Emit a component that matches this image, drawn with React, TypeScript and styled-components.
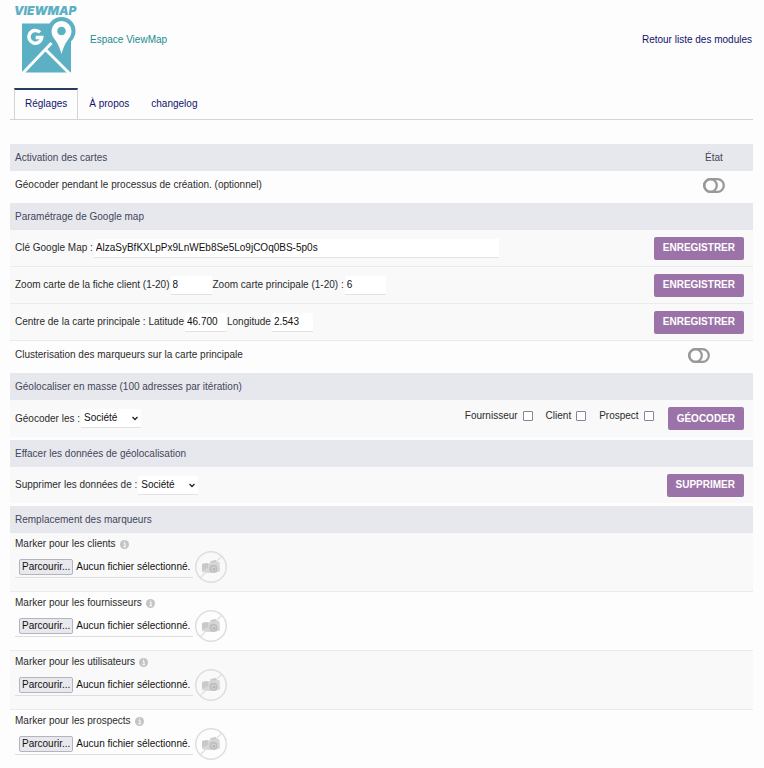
import React, { useId } from "react";
import styled, { createGlobalStyle } from "styled-components";

const GlobalStyle = createGlobalStyle`
  *, *::before, *::after { box-sizing: border-box; }
  body {
    margin: 0;
    background: #fdfdfd;
    color: #2b2b2b;
    font: 10px/12px "Liberation Sans", Arial, sans-serif;
  }
  input, select, button { font: inherit; color: inherit; margin: 0; }
`;

const Page = styled.main`
  padding: 0 11px 0 10px;
`;

const Header = styled.header`
  display: flex;
  align-items: center;
  height: 80px;
  padding: 0 1px 0 4px;
`;

const Logo = styled.svg`
  flex: none;
  width: 68px;
  height: 78px;
  overflow: visible;
`;

const LogoText = styled.text`
  font: italic 900 12px Inter, sans-serif;
  fill: #5cb0c3;
`;

const Title = styled.h1`
  flex: 1;
  margin: 0 0 0 8px;
  font-size: 10px;
  font-weight: 400;
  color: #1c8c8c;
`;

const NavLink = styled.a`
  color: #12126e;
  text-decoration: none;
`;

const Tabs = styled.nav`
  display: flex;
  margin-top: 8px;
  padding-left: 4px;
  border-bottom: 1px solid #d4d4d4;
`;

const Tab = styled(NavLink)<{ $active?: boolean }>`
  padding: 8px 10px 9px;
  border: 1px solid ${(p) => (p.$active ? "#d4d4d4" : "transparent")};
  border-top: 2px solid ${(p) => (p.$active ? "#263c5c" : "transparent")};
  border-bottom: 0;
`;

const Settings = styled.form`
  margin-top: 24px;
`;

const Section = styled.section<{ $gap?: boolean }>`
  padding-bottom: ${(p) => (p.$gap ? 3 : 0)}px;
`;

const SectionHead = styled.div`
  display: flex;
  align-items: center;
  justify-content: space-between;
  height: 27px;
  padding-left: 5px;
  background: #e7e8ed;
  color: #44465a;
`;

const SectionTitle = styled.h2`
  margin: 0;
  font-size: 10px;
  font-weight: 400;
`;

const Row = styled.div<{ $shade?: boolean; $line?: boolean; $height?: number }>`
  display: flex;
  align-items: center;
  justify-content: space-between;
  min-height: ${(p) => p.$height ?? 37}px;
  padding-left: 5px;
  background: ${(p) => (p.$shade ? "#f9f9f9" : "#fdfdfd")};
  border-bottom: ${(p) => (p.$line ? "1px solid #ebebeb" : "0")};
`;

const SwitchRow = styled(Row)`
  padding-bottom: 4px;
`;

const Fields = styled.div`
  display: flex;
  align-items: center;
  gap: 1px;
`;

const StateCell = styled.div<{ $wide?: boolean }>`
  display: flex;
  justify-content: center;
  width: ${(p) => (p.$wide ? 108 : 78)}px;
`;

const Actions = styled.div`
  display: flex;
  align-items: center;
  padding-right: 9px;
`;

const TextInput = styled.input<{ $long?: boolean }>`
  width: ${(p) => (p.$long ? 405 : 41)}px;
  height: 19px;
  padding: 0 2px;
  border: 0;
  border-bottom: 1px solid #e2e2e2;
  background: #fff;
  color: #111;
`;

const Button = styled.button`
  height: 23px;
  padding: 0 9px;
  border: 0;
  border-radius: 2px;
  background: #9c73a9;
  color: #fff;
  font-weight: 700;
  text-transform: uppercase;
  cursor: pointer;
`;

const SwitchButton = styled.button`
  display: flex;
  padding: 0;
  border: 0;
  background: none;
  cursor: pointer;
`;

const SelectBox = styled.div`
  display: grid;
  align-items: center;
  width: 60px;
  > * { grid-area: 1 / 1; }
  > svg { justify-self: end; margin-right: 3px; pointer-events: none; }
`;

const Select = styled.select`
  appearance: none;
  width: 100%;
  height: 19px;
  padding: 0 3px;
  border: 0;
  border-bottom: 1px solid #e2e2e2;
  border-radius: 0;
  background: #fff;
  color: #111;
`;

const Checks = styled.div`
  display: flex;
  gap: 13px;
  margin-right: 14px;
  padding-bottom: 5px;
`;

const CheckLabel = styled.label`
  display: flex;
  align-items: center;
  gap: 5px;
`;

const Check = styled.input`
  appearance: none;
  width: 10px;
  height: 10px;
  border: 1px solid #85859a;
  border-radius: 1px;
  background: #fff;
  &:checked { background: #9c73a9; }
`;

const MarkerRow = styled.div<{ $shade: boolean }>`
  padding: 5px 5px 7px;
  background: ${(p) => (p.$shade ? "#f9f9f9" : "#fdfdfd")};
  border-bottom: 1px solid #ebebeb;
`;

const MarkerTitle = styled.div`
  display: flex;
  align-items: center;
  gap: 4px;
`;

const MarkerFile = styled.div`
  display: flex;
  align-items: center;
  gap: 1px;
  height: 34px;
`;

const FileLabel = styled.label`
  position: relative;
  display: flex;
  align-items: center;
  gap: 3px;
  width: 178px;
  height: 22px;
  padding-left: 4px;
  border-bottom: 1px solid #dedede;
  color: #111;
  white-space: nowrap;
  cursor: pointer;
`;

const FileInput = styled.input`
  position: absolute;
  inset: 0;
  width: 100%;
  opacity: 0;
`;

const FileButton = styled.span`
  padding: 1px 2px;
  border: 1px solid #b4b4c0;
  border-radius: 2px;
  background: #e9e9ed;
`;

const ViewMapLogo = () => (
  <Logo viewBox="0 -4 68 78" role="img" aria-label="ViewMap">
    <LogoText x="0" y="10">VIEWMAP</LogoText>
    <path d="M8 18.500h49v49H8z" fill="#5cb0c3" />
    <path d="M8.500 68.500 37.500 38M31 44l25 25" stroke="#fdfdfd" strokeWidth="3" fill="none" />
    <path d="M26 27.400a6.400 6.400 0 1 0 1.700 5.200h-6" stroke="#fdfdfd" strokeWidth="3.500" fill="none" />
    <circle cx="47.500" cy="26" r="14" fill="#5cb0c3" />
    <path d="M37.500 26a10 10 0 0 1 20 0c0 4-1.800 6.500-4 9.500-3 4-4.500 8-6 13.500-1.500-5.500-3-9.500-6-13.500-2.200-3-4-5.500-4-9.500z" fill="#fdfdfd" />
    <circle cx="47.500" cy="26" r="4.300" fill="#5cb0c3" />
  </Logo>
);

const ToggleOff = () => (
  <svg width="22" height="15" viewBox="0 0 22 15" fill="none" stroke="#999" strokeWidth="2.300">
    <rect x="1.200" y="1.200" width="19.600" height="12.600" rx="6.300" />
    <circle cx="7.500" cy="7.500" r="6.300" />
  </svg>
);

const Chevron = () => (
  <svg width="6" height="5" viewBox="0 0 6 5" fill="none" stroke="#222" strokeWidth="1.3">
    <path d="m.5 1 2.500 2.500L5.500 1" />
  </svg>
);

const InfoIcon = () => (
  <svg width="9" height="9" viewBox="0 0 8 8" aria-hidden="true">
    <circle cx="4" cy="4" r="4" fill="#c4c4c4" />
    <path d="M3.200 3.300h1.300v2.500M3 6h2.200M3.500 1.800h1" stroke="#fff" strokeWidth="0.900" fill="none" />
  </svg>
);

const NoPhoto = () => (
  <svg width="34" height="34" viewBox="0 0 34 34" role="img" aria-label="Aucune image">
    <circle cx="17" cy="17" r="15.300" fill="none" stroke="#dedede" strokeWidth="1.500" />
    <path d="M6 28 28 6" stroke="#e0e0e0" strokeWidth="1.300" />
    <path d="M8 14 13 13l1 .5 2-.5.500-2 5-1 1.500 2 2.500.2.500 9-4 1.500-7 .3L8 22z" fill="#d6d6d6" />
    <path d="M8 14 13 13l1 1v4l-6 2.500zM17 11.200l4.500-1 1 1.500-5 1.200z" fill="#c9c9c9" />
    <circle cx="19.500" cy="18.800" r="4" fill="#bebebe" />
    <circle cx="19.700" cy="19" r="2.400" fill="#d2d2d2" />
    <circle cx="20" cy="19.200" r="1.300" fill="#b4b4b4" />
  </svg>
);

function Switch({ label }: { label: string }) {
  return (
    <SwitchButton type="button" role="switch" aria-checked={false} aria-label={label}>
      <ToggleOff />
    </SwitchButton>
  );
}

function Field({ label, value, long }: { label: string; value: string; long?: boolean }) {
  const id = useId();
  return (
    <>
      <label htmlFor={id}>{label}</label>
      <TextInput id={id} defaultValue={value} $long={long} />
    </>
  );
}

function TypeSelect({ label }: { label: string }) {
  const id = useId();
  return (
    <Fields>
      <label htmlFor={id}>{label}</label>
      <SelectBox>
        <Select id={id}>
          <option>Société</option>
        </Select>
        <Chevron />
      </SelectBox>
    </Fields>
  );
}

function Head({ title, children }: { title: string; children?: React.ReactNode }) {
  return (
    <SectionHead>
      <SectionTitle>{title}</SectionTitle>
      {children}
    </SectionHead>
  );
}

const Save = () => (
  <Actions>
    <Button type="button">Enregistrer</Button>
  </Actions>
);

function Marker({ name, shade }: { name: string; shade: boolean }) {
  return (
    <MarkerRow $shade={shade}>
      <MarkerTitle>
        Marker pour les {name}
        <InfoIcon />
      </MarkerTitle>
      <MarkerFile>
        <FileLabel>
          <FileInput type="file" aria-label={`Marker pour les ${name}`} />
          <FileButton>Parcourir...</FileButton>
          Aucun fichier sélectionné.
        </FileLabel>
        <NoPhoto />
      </MarkerFile>
    </MarkerRow>
  );
}

const CLUSTER = "Clusterisation des marqueurs sur la carte principale";
const GEOCODE = "Géocoder pendant le processus de création. (optionnel)";

export default function App() {
  return (
    <Page>
      <GlobalStyle />
      <Header>
        <ViewMapLogo />
        <Title>Espace ViewMap</Title>
        <NavLink href="#modules">Retour liste des modules</NavLink>
      </Header>
      <Tabs>
        <Tab href="#reglages" $active>Réglages</Tab>
        <Tab href="#apropos">À propos</Tab>
        <Tab href="#changelog">changelog</Tab>
      </Tabs>
      <Settings>
        <Section>
          <Head title="Activation des cartes">
            <StateCell>État</StateCell>
          </Head>
          <SwitchRow $height={32}>
            <span>{GEOCODE}</span>
            <StateCell><Switch label={GEOCODE} /></StateCell>
          </SwitchRow>
        </Section>
        <Section>
          <Head title="Paramétrage de Google map" />
          <Row $shade $line>
            <Fields>
              <Field label="Clé Google Map :" value="AlzaSyBfKXLpPx9LnWEb8Se5Lo9jCOq0BS-5p0s" long />
            </Fields>
            <Save />
          </Row>
          <Row $shade $line>
            <Fields>
              <Field label="Zoom carte de la fiche client (1-20)" value="8" />
              <Field label="Zoom carte principale (1-20) :" value="6" />
            </Fields>
            <Save />
          </Row>
          <Row $shade $line>
            <Fields>
              <Field label="Centre de la carte principale : Latitude" value="46.700" />
              <Field label="Longitude" value="2.543" />
            </Fields>
            <Save />
          </Row>
          <SwitchRow $height={32}>
            <span>{CLUSTER}</span>
            <StateCell $wide><Switch label={CLUSTER} /></StateCell>
          </SwitchRow>
        </Section>
        <Section $gap>
          <Head title="Géolocaliser en masse (100 adresses par itération)" />
          <Row $shade>
            <TypeSelect label="Géocoder les :" />
            <Actions>
              <Checks>
                {["Fournisseur", "Client", "Prospect"].map((name) => (
                  <CheckLabel key={name}>
                    {name}
                    <Check type="checkbox" />
                  </CheckLabel>
                ))}
              </Checks>
              <Button type="button">Géocoder</Button>
            </Actions>
          </Row>
        </Section>
        <Section $gap>
          <Head title="Effacer les données de géolocalisation" />
          <Row $shade $height={36}>
            <TypeSelect label="Supprimer les données de :" />
            <Actions>
              <Button type="button">Supprimer</Button>
            </Actions>
          </Row>
        </Section>
        <Section>
          <Head title="Remplacement des marqueurs" />
          {["clients", "fournisseurs", "utilisateurs", "prospects"].map((name, i) => (
            <Marker key={name} name={name} shade={i % 2 === 0} />
          ))}
        </Section>
      </Settings>
    </Page>
  );
}
